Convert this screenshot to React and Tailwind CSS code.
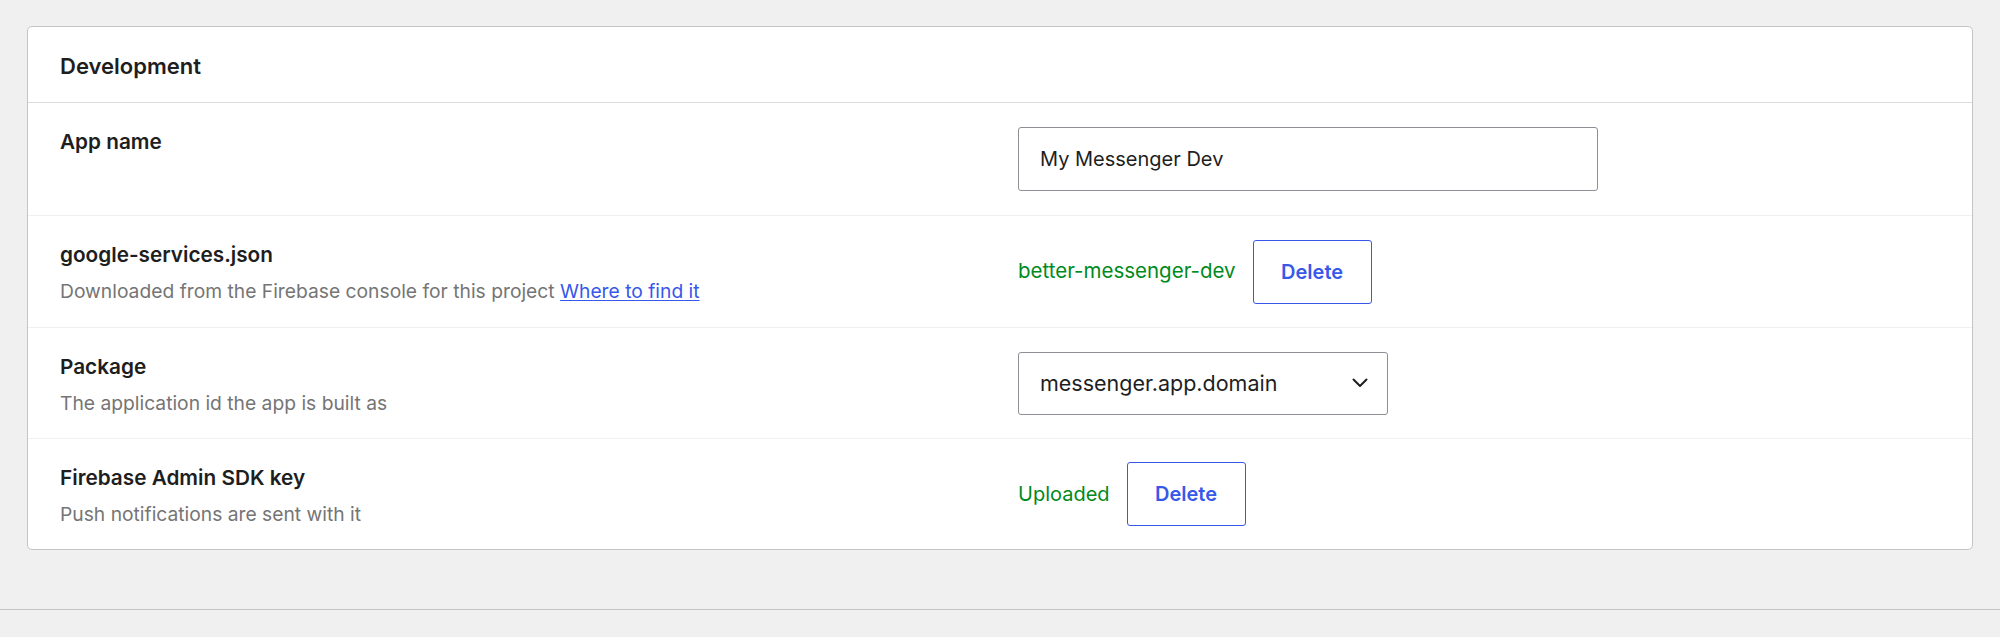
const rows = [
  { title: "google-services.json", desc: "Downloaded from the Firebase console for this project", link: "Where to find it", status: "better-messenger-dev" },
];

function Label({ title, desc, link, tight }) {
  return (
    <div className={tight ? "pt-[27px] pb-[23px]" : "pt-[27px] pb-[24px]"}>
      <div className="text-[20.75px] leading-[24px] font-semibold text-[#1e1e1e]">{title}</div>
      {desc && (
        <div className="mt-[12px] text-[19.25px] leading-[24px] text-[#757575]">
          {desc}{" "}
          {link && (
            <a href="#" className="text-[#3858e9] underline underline-offset-2">
              {link}
            </a>
          )}
        </div>
      )}
    </div>
  );
}

function DeleteButton() {
  return (
    <button className="h-[64px] w-[119px] rounded-[3px] border border-[#3858e9] bg-white text-[20px] font-semibold text-[#3858e9]">
      Delete
    </button>
  );
}

function Row({ children, label }) {
  return (
    <div className="grid grid-cols-2 gap-x-9 px-8 border-t border-[#f0f0f0]">
      <Label {...label} />
      <div className="flex items-center">{children}</div>
    </div>
  );
}

export default function App() {
  return (
    <div className="min-h-screen bg-[#f0f0f0] font-['Inter',sans-serif] text-[#1e1e1e]">
      <div className="px-[27px] pt-[26px]">
        <div className="rounded-[5px] border border-[#c3c4c7] bg-white">
          <div className="flex h-[76px] items-center border-b border-[#dcdcde] px-8 pt-1">
            <h2 className="text-[22px] font-semibold">Development</h2>
          </div>

          <div className="grid grid-cols-2 gap-x-9 px-8">
            <Label title="App name" />
            <div className="flex items-center py-6">
              <input
                defaultValue="My Messenger Dev"
                className="h-[64px] w-[580px] rounded-[3px] border border-[#8c8f94] px-[21px] text-[20px] text-[#1e1e1e] outline-none"
              />
            </div>
          </div>

          {rows.map((r) => (
            <Row key={r.title} label={r}>
              <div className="flex items-center gap-[17px]">
                <span className="text-[20.5px] text-[#008a20]">{r.status}</span>
                <DeleteButton />
              </div>
            </Row>
          ))}

          <Row label={{ title: "Package", desc: "The application id the app is built as", tight: true }}>
            <div className="flex h-[63px] w-[370px] items-center justify-between rounded-[3px] border border-[#8c8f94] pl-[21px] pr-[19px] text-[21.5px]">
              <span>messenger.app.domain</span>
              <svg width="16" height="10" viewBox="0 0 16 10" fill="none">
                <path d="M1.5 1.5 L8 8 L14.5 1.5" stroke="#1e1e1e" strokeWidth="2" strokeLinecap="round" strokeLinejoin="round" />
              </svg>
            </div>
          </Row>

          <Row label={{ title: "Firebase Admin SDK key", desc: "Push notifications are sent with it", tight: true }}>
            <div className="flex items-center gap-[17px]">
              <span className="text-[20px] text-[#008a20]">Uploaded</span>
              <DeleteButton />
            </div>
          </Row>
        </div>
      </div>
      <div className="mt-[59px] border-t border-[#c3c4c7]" />
    </div>
  );
}
